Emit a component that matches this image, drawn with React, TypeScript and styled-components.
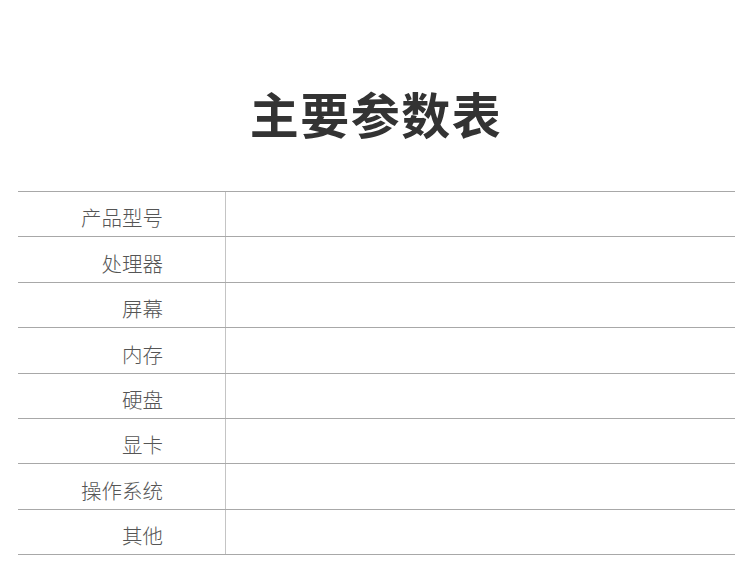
import React from "react";
import styled, { createGlobalStyle } from "styled-components";

const Global = createGlobalStyle`
  html, body { margin: 0; padding: 0; background: #fff; }
  body { font-family: "Noto Sans CJK SC", "Noto Sans", sans-serif; }
`;

const Page = styled.div`
  width: 750px;
  height: 578px;
  display: flex;
  flex-direction: column;
  align-items: flex-start;
  box-sizing: border-box;
  padding-top: 89px;
`;

const Title = styled.h1`
  margin: 0;
  align-self: stretch;
  text-align: center;
  font-size: 49px;
  line-height: 48px;
  font-weight: 700;
  color: #333;
  letter-spacing: 1.5px;
  padding-left: 2px;
`;

const Table = styled.div`
  margin-top: 54px;
  margin-left: 18px;
  width: 717px;
  display: flex;
  flex-direction: column;
  border-bottom: 1px solid #a8a8a8;
`;

const Row = styled.div`
  display: grid;
  grid-template-columns: 208px 1fr;
  height: 45.375px;
  box-sizing: border-box;
  border-top: 1px solid #a8a8a8;
`;

const Label = styled.div`
  display: flex;
  align-items: center;
  justify-content: flex-end;
  padding: 7px 62px 0 0;
  font-size: 20.5px;
  font-weight: 300;
  color: #555;
  border-right: 1px solid #c4c4c4;
  line-height: 1;
`;

const Value = styled.div``;

const rows = ["产品型号", "处理器", "屏幕", "内存", "硬盘", "显卡", "操作系统", "其他"];

export default function App() {
  return (
    <>
      <Global />
      <Page>
        <Title>主要参数表</Title>
        <Table>
          {rows.map((r) => (
            <Row key={r}>
              <Label>{r}</Label>
              <Value />
            </Row>
          ))}
        </Table>
      </Page>
    </>
  );
}
